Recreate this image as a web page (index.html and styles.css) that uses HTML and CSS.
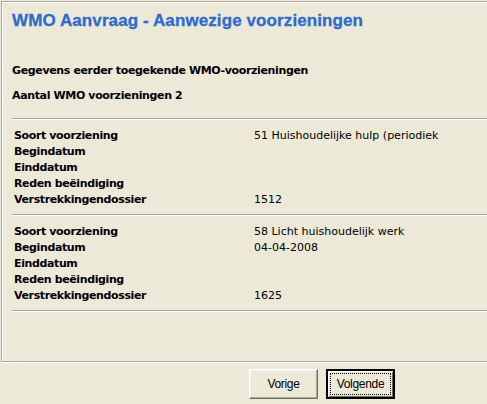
FILE: index.html
```html
<!DOCTYPE html>
<html lang="nl">
<head>
    <meta charset="UTF-8">
    <title>WMO Aanvraag - Aanwezige voorzieningen</title>
    <link rel="stylesheet" href="styles.css">
</head>
<body>
    <div class="frame">
        <h1>WMO Aanvraag - Aanwezige voorzieningen</h1>
        <p class="intro">Gegevens eerder toegekende WMO-voorzieningen</p>
        <p class="count">Aantal WMO voorzieningen 2</p>
        <div class="rule"></div>
        <table class="item">
            <tr><th>Soort voorziening</th><td>51 Huishoudelijke hulp (periodiek</td></tr>
            <tr><th>Begindatum</th><td></td></tr>
            <tr><th>Einddatum</th><td></td></tr>
            <tr><th>Reden beëindiging</th><td></td></tr>
            <tr><th>Verstrekkingendossier</th><td>1512</td></tr>
        </table>
        <div class="rule"></div>
        <table class="item">
            <tr><th>Soort voorziening</th><td>58 Licht huishoudelijk werk</td></tr>
            <tr><th>Begindatum</th><td>04-04-2008</td></tr>
            <tr><th>Einddatum</th><td></td></tr>
            <tr><th>Reden beëindiging</th><td></td></tr>
            <tr><th>Verstrekkingendossier</th><td>1625</td></tr>
        </table>
        <div class="rule"></div>
    </div>
    <div class="buttons">
        <button class="btn">Vorige</button>
        <button class="btn default"><span>Volgende</span></button>
    </div>
</body>
</html>
```

FILE: styles.css
```css
body {
    margin: 0;
    background: #ece9d8;
    font-family: "DejaVu Sans", Verdana, sans-serif;
    font-size: 11px;
    color: #000;
    width: 487px;
    height: 404px;
    overflow: hidden;
}
.frame {
    margin: 1px 0 0 1px;
    height: 359px;
    border: 1px solid #aca899;
    border-right: none;
    box-shadow: inset 1px 1px 0 #fff, 0 1px 0 #fff;
    padding: 0 0 0 10px;
    box-sizing: content-box;
}
h1 {
    margin: 0;
    padding-top: 8px;
    font-family: "Liberation Sans", Arial, sans-serif;
    font-size: 17px;
    font-weight: bold;
    line-height: 22px;
    letter-spacing: 0.1px;
    color: #2f6acd;
    -webkit-text-stroke: 0.3px #2f6acd;
}
.intro, .count {
    margin: 0;
    font-weight: bold;
    line-height: 16px;
    letter-spacing: -0.36px;
}
.intro {
    margin-top: 31px;
}
.count {
    margin-top: 9px;
}
.rule {
    margin-top: 14px;
    height: 1px;
    background: #aca899;
    border-bottom: 1px solid #fff;
}
.item {
    border-collapse: collapse;
    margin: 8px 0 6px 2px;
}
.item th {
    text-align: left;
    font-weight: bold;
    letter-spacing: -0.38px;
    width: 240px;
    padding: 0;
    height: 16px;
    line-height: 16px;
}
.item td {
    padding: 0;
    height: 16px;
    line-height: 16px;
}
.item + .rule {
    margin-top: 0;
}
.buttons {
    display: flex;
    gap: 8px;
    padding: 7px 0 0 249px;
}
.btn {
    width: 69px;
    height: 30px;
    padding: 0;
    background: #ece9d8;
    font-family: "Liberation Sans", Arial, sans-serif;
    font-size: 12px;
    letter-spacing: -0.3px;
    color: #000;
    border: 1px solid;
    border-color: #fff #716f64 #716f64 #fff;
    box-shadow: inset -1px -1px 0 #aca899, inset 1px 1px 0 #f5f4ee;
}
.btn.default {
    border: 2px solid #000;
    box-shadow: inset 1px 1px 0 #fff, inset -1px -1px 0 #716f64;
    padding: 2px;
    height: 30px;
}
.btn.default span {
    display: flex;
    align-items: center;
    justify-content: center;
    height: 100%;
    border: 1px dotted #000;
    box-sizing: border-box;
}
```
